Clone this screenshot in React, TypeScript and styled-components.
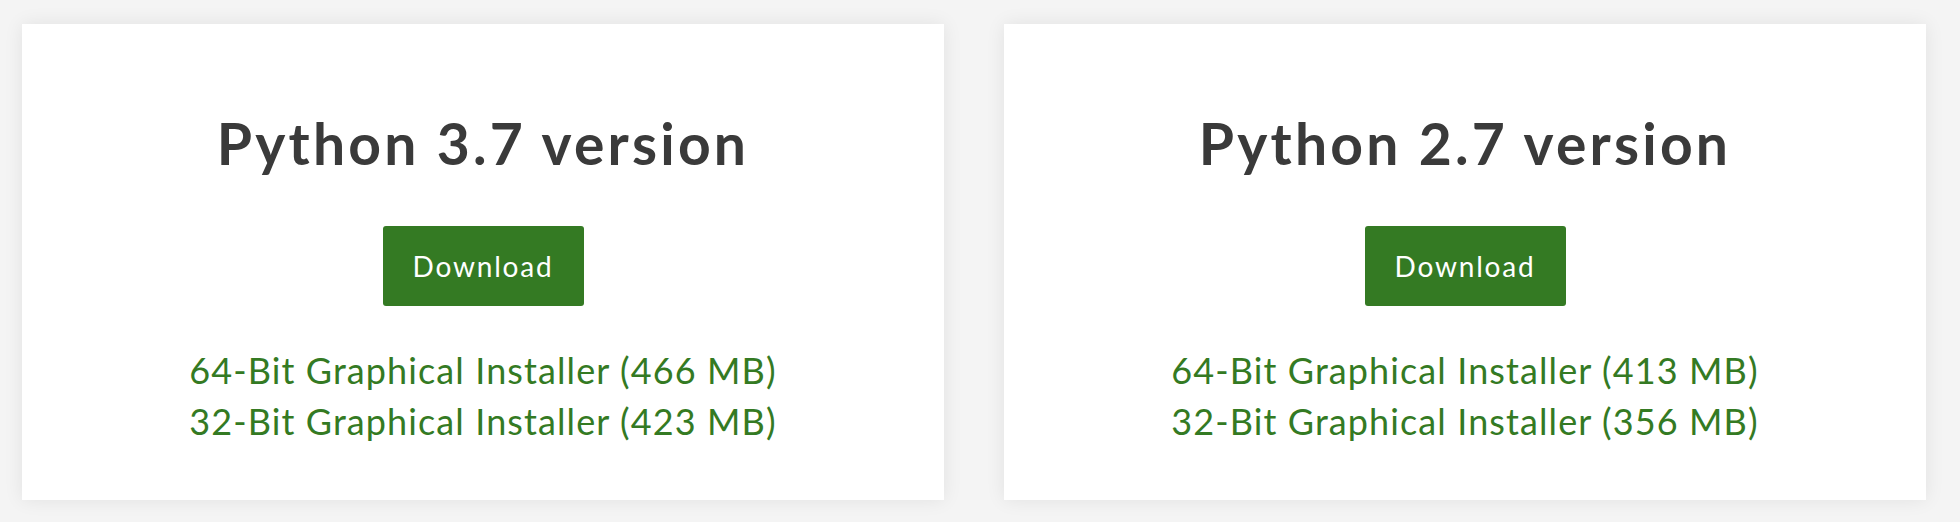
import React, { FC } from "react";
import styled, { createGlobalStyle } from "styled-components";

const GlobalStyle = createGlobalStyle`
  html, body {
    margin: 0;
    padding: 0;
    background: #f4f4f4;
  }
  body {
    font-family: Lato, "Liberation Sans", sans-serif;
  }
`;

interface Installer {
  label: string;
  size: string;
}

interface Release {
  version: string;
  installers: Installer[];
}

const releases: Release[] = [
  {
    version: "Python 3.7 version",
    installers: [
      { label: "64-Bit Graphical Installer", size: "466 MB" },
      { label: "32-Bit Graphical Installer", size: "423 MB" },
    ],
  },
  {
    version: "Python 2.7 version",
    installers: [
      { label: "64-Bit Graphical Installer", size: "413 MB" },
      { label: "32-Bit Graphical Installer", size: "356 MB" },
    ],
  },
];

const Page = styled.div`
  display: grid;
  grid-template-columns: 922px 922px;
  gap: 60px;
  padding: 24px 34px 22px 22px;
  height: 522px;
  box-sizing: border-box;
`;

const Card = styled.section`
  background: #fff;
  box-shadow: 0 0 18px rgba(0, 0, 0, 0.08);
  display: flex;
  flex-direction: column;
  align-items: center;
  padding-top: 85px;
  box-sizing: border-box;
`;

const Title = styled.h2`
  margin: 0;
  font-size: 57px;
  font-weight: 700;
  line-height: 1.2;
  letter-spacing: 3.2px;
  color: #3a3a3a;
`;

const DownloadButton = styled.a`
  margin-top: 49px;
  height: 80px;
  width: 201px;
  display: flex;
  align-items: center;
  justify-content: center;
  background: #347a23;
  border-radius: 3px;
  color: #fff;
  font-size: 28px;
  letter-spacing: 1.8px;
  text-decoration: none;
`;

const Links = styled.div`
  margin-top: 39px;
  display: flex;
  flex-direction: column;
  align-items: center;
`;

const InstallerLink = styled.a`
  font-size: 36px;
  line-height: 51px;
  letter-spacing: 1.1px;
  color: #347a23;
  text-decoration: none;
`;

const ReleaseCard: FC<{ release: Release }> = ({ release }) => (
  <Card>
    <Title>{release.version}</Title>
    <DownloadButton href="#">Download</DownloadButton>
    <Links>
      {release.installers.map((i) => (
        <InstallerLink key={i.label} href="#">
          {i.label} ({i.size})
        </InstallerLink>
      ))}
    </Links>
  </Card>
);

const App: FC = () => (
  <>
    <GlobalStyle />
    <Page>
      {releases.map((r) => (
        <ReleaseCard key={r.version} release={r} />
      ))}
    </Page>
  </>
);

export default App;
